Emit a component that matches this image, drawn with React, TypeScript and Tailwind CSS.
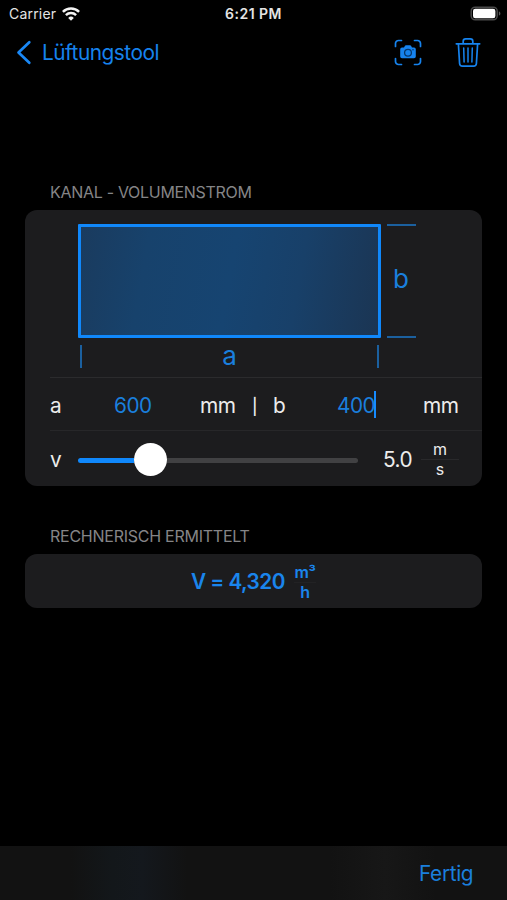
import React from "react";

function StatusBar() {
  return (
    <header className="flex h-[28px] items-center leading-none text-[#e4e4e4]">
      <div className="flex w-[225px] items-center pl-[9px]">
        <span className="w-[52px] whitespace-nowrap text-[14px] tracking-[0.2px]">Carrier</span>
        <svg width="20" height="15" viewBox="0 0 20 15" fill="none" stroke="#f4f4f4" strokeWidth="2.5">
          <path d="M1.900 4.800a11.700 11.700 0 0 1 16.200 0" />
          <path d="M4.900 8.100a7.400 7.400 0 0 1 10.200 0" />
          <path d="M10 13.800 7.200 10.900a4 4 0 0 1 5.600 0Z" fill="#f4f4f4" stroke="none" />
        </svg>
      </div>
      <span className="w-[60px] whitespace-nowrap pb-px text-[14px] font-semibold tracking-[0.5px]">6:21 PM</span>
      <svg className="ml-[185px]" width="32" height="16" viewBox="0 0 32 16">
        <rect x="1.2" y="1.2" width="26" height="12.6" rx="4" fill="none" stroke="#4a4a4a" strokeWidth="1.5" />
        <rect x="3" y="2.800" width="22.4" height="9.400" rx="2.300" fill="#fff" />
        <path d="M28.900 5.400c2 .7 2 3.500 0 4.200Z" fill="#5a5a5a" />
      </svg>
    </header>
  );
}

function ScanCameraIcon() {
  return (
    <svg width="28" height="28" viewBox="0 0 28 28" fill="none" stroke="#1683ee" strokeWidth="1.700" strokeLinecap="round">
      <path d="M1.500 7.500V4.500a3 3 0 0 1 3-3h3M20.500 1.500h3a3 3 0 0 1 3 3v3M26.500 19.500v3a3 3 0 0 1-3 3h-3M7.500 25.500h-3a3 3 0 0 1-3-3v-3" />
      <path d="M8 8.400h2l1-1.600q.3-.5.9-.5h4.200q.6 0 .9.500l1 1.600h2q1.800 0 1.800 1.800v7.200q0 1.800-1.800 1.800H8q-1.800 0-1.800-1.800v-7.200Q6.200 8.400 8 8.400Z" fill="#1683ee" stroke="none" />
      <circle cx="14" cy="13.700" r="3.400" stroke="#06376b" strokeWidth="1.300" />
      <circle cx="19" cy="10.800" r=".8" fill="#06376b" stroke="none" />
    </svg>
  );
}

function TrashIcon() {
  return (
    <svg width="26" height="32" viewBox="0 0 26 32" fill="none" stroke="#1683ee" strokeWidth="1.700" strokeLinecap="round" strokeLinejoin="round">
      <path d="M1.300 6.800h23.400M8.200 6.500V4.200q0-2.400 2.400-2.400h4.800q2.400 0 2.400 2.400v2.300" />
      <path d="m3.400 7 1.200 19.500q.2 2.700 2.800 2.700h11.200q2.600 0 2.800-2.700L22.600 7" />
      <path d="m8.700 11 .4 14M13 11v14M17.300 11l-.4 14" strokeWidth="1.500" />
    </svg>
  );
}

function NavBar() {
  return (
    <nav className="flex h-[49px] items-center text-[#1683ee]">
      <svg className="ml-[16px]" width="16" height="26" viewBox="0 0 16 26" fill="none" stroke="#1a88f5" strokeWidth="2.700" strokeLinecap="round" strokeLinejoin="round">
        <path d="M13.300 2.200 2.500 12.500l10.800 10.300" />
      </svg>
      <span className="ml-[10px] w-[352px] whitespace-nowrap text-[20.8px] tracking-[-0.48px]">Lüftungstool</span>
      <ScanCameraIcon />
      <div className="ml-[33px]">
        <TrashIcon />
      </div>
    </nav>
  );
}

function DuctDiagram() {
  return (
    <div className="h-[167px] pl-[53px] pt-[14px] text-[26px] leading-none text-[#1a7fdd]">
      <div className="flex h-[114px]">
        <div className="w-[303px] rounded-[1px] border-[3px] border-[#1088fb] bg-[linear-gradient(100deg,#1a3b5e_0%,#17426c_22%,#164471_50%,#184069_72%,#1b3553_100%)]" />
        <div className="ml-[6px] flex w-[29px] flex-col items-start justify-between border-y-2 border-[#1b609f]">
          <span className="ml-[6px] mt-[40px]">b</span>
        </div>
      </div>
      <div className="ml-[2px] mt-[7px] flex h-[23px] w-[299px] items-center justify-center border-x-2 border-[#1b609f]">
        <span className="-mt-[2px]">a</span>
      </div>
    </div>
  );
}

function DimensionRow() {
  return (
    <div className="ml-[25px] flex h-[53px] items-center whitespace-nowrap border-t border-[#2b2b2d] pt-[3px] text-[20.8px] tracking-[-0.5px]">
      <span className="w-[64px]">a</span>
      <span className="w-[86px] text-[#1a7fdd]">600</span>
      <span className="w-[52px]">mm</span>
      <span className="w-[21px] text-[16px] font-medium">|</span>
      <span className="w-[64px]">b</span>
      <span className="w-[37px] text-[#1a7fdd]">400</span>
      <span className="h-[27px] w-[2px] -translate-y-px bg-[#168bff]" />
      <span className="ml-[47px]">mm</span>
    </div>
  );
}

function VelocityRow() {
  return (
    <div className="ml-[25px] flex h-[56px] items-center whitespace-nowrap border-t border-[#272729] text-[20.8px] tracking-[-0.5px]">
      <span className="w-[28px] pt-[3px]">v</span>
      <div className="mt-[2px] flex w-[280px] items-center">
        <div className="mt-[2px] h-[5px] w-[56px] rounded-l-full bg-[#1088fb]" />
        <div className="h-[33px] w-[33px] shrink-0 rounded-full bg-white" />
        <div className="mt-[2px] h-[5px] flex-1 rounded-r-full bg-[#414143]" />
      </div>
      <span className="ml-[25px] w-[37px] pt-[3px]">5.0</span>
      <div className="ml-px mt-px flex w-[38px] flex-col items-center text-[16px] leading-[19px] tracking-normal">
        <span>m</span>
        <span className="h-px w-full bg-[#29292b]" />
        <span>s</span>
      </div>
    </div>
  );
}

export default function App() {
  return (
    <div className="flex h-[900px] w-[507px] flex-col overflow-hidden bg-black font-['Inter','Liberation_Sans',sans-serif] text-[#ececec]">
      <StatusBar />
      <NavBar />
      <main className="flex-1 pl-[25px]">
        <h2 className="mt-[105px] h-[28px] whitespace-nowrap pl-[25px] text-[16px] leading-[20px] tracking-[-0.3px] text-[#858587]">
          KANAL - VOLUMENSTROM
        </h2>
        <section className="h-[276px] w-[457px] rounded-[12px] bg-[#1c1c1e]">
          <DuctDiagram />
          <DimensionRow />
          <VelocityRow />
        </section>
        <h2 className="mt-[40px] h-[28px] whitespace-nowrap pl-[25px] text-[16px] leading-[20px] tracking-[-0.25px] text-[#858587]">
          RECHNERISCH ERMITTELT
        </h2>
        <section className="flex h-[54px] w-[457px] items-center rounded-[12px] bg-[#1c1c1e] pl-[166px] font-semibold text-[#1a85ec]">
          <span className="w-[94px] whitespace-nowrap pt-[2px] text-[20.8px] tracking-[-0.55px]">V = 4,320</span>
          <div className="ml-[9px] mt-[2px] flex w-[22px] flex-col items-center text-[16px] leading-[19px] tracking-[-0.3px]">
            <span>m³</span>
            <span className="h-px w-full bg-[#222224]" />
            <span>h</span>
          </div>
        </section>
      </main>
      <footer className="h-[54px] bg-[linear-gradient(90deg,#121212_14%,#13171a_22%,#14181d_28%,#121212_37%,#121212_65%,#171717_76%,#121212_86%)] pl-[419px] pt-[12px] text-[20.8px] leading-[31px] tracking-[-0.35px] text-[#1a7fdd]">
        <span>Fertig</span>
      </footer>
    </div>
  );
}
